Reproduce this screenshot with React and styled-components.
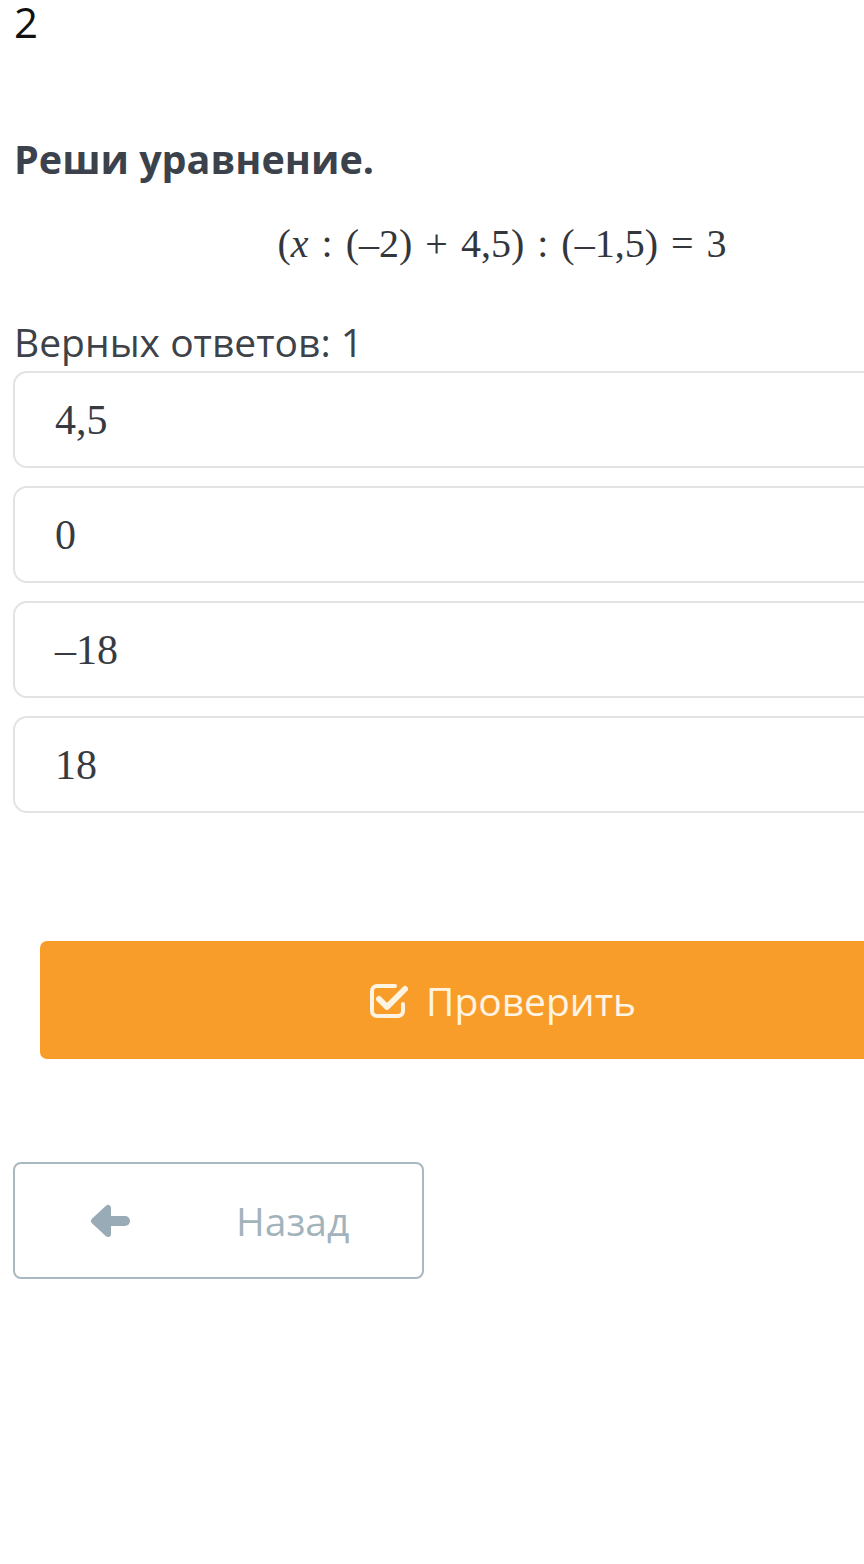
import React from 'react';
import styled, { createGlobalStyle } from 'styled-components';

const Global = createGlobalStyle`
  html, body {
    margin: 0;
    padding: 0;
    background: #fff;
    overflow: hidden;
  }
  body {
    font-family: "Open Sans", "Noto Sans", sans-serif;
  }
`;

const Page = styled.div`
  width: 864px;
  height: 1564px;
  overflow: hidden;
  background: #fff;
`;

const Content = styled.div`
  width: 978px;
  padding-left: 13px;
  display: flex;
  flex-direction: column;
`;

const Number = styled.div`
  font-size: 42px;
  line-height: 44px;
  color: #111;
  padding-left: 1px;
`;

const Title = styled.h2`
  margin: 93px 0 0;
  font-size: 39.5px;
  line-height: 44px;
  font-weight: 700;
  color: #3b424c;
  padding-left: 1px;
`;

const Equation = styled.div`
  margin-top: 41px;
  text-align: center;
  font-family: "Liberation Serif", "Times New Roman", serif;
  font-size: 40px;
  line-height: 44px;
  color: #33373d;
  word-spacing: 3px;
  i {
    font-style: italic;
  }
`;

const Hint = styled.div`
  margin-top: 54px;
  font-size: 39px;
  line-height: 44px;
  color: #3d4249;
  padding-left: 1px;
`;

const Options = styled.div`
  margin-top: 7px;
  display: flex;
  flex-direction: column;
  gap: 18px;
`;

const Option = styled.div`
  height: 97px;
  box-sizing: border-box;
  border: 2px solid #e3e3e3;
  border-radius: 14px;
  display: flex;
  align-items: center;
  padding-left: 40px;
  font-family: "Liberation Serif", "Times New Roman", serif;
  font-size: 42px;
  line-height: 44px;
  color: #373b41;
`;

const CheckButton = styled.button`
  margin: 128px 27px 0;
  height: 118px;
  border: none;
  border-radius: 7px;
  background: #f99d2a;
  color: #fff4e2;
  font-family: "Open Sans", "Noto Sans", sans-serif;
  font-size: 39px;
  display: flex;
  align-items: center;
  justify-content: center;
  gap: 16px;
  padding: 0;
`;

const BackButton = styled.button`
  margin-top: 103px;
  width: 411px;
  height: 117px;
  box-sizing: border-box;
  border: 2px solid #a9b9c2;
  border-radius: 8px;
  background: #fff;
  display: flex;
  align-items: center;
  padding: 0 0 0 75px;
  gap: 106px;
  color: #a3b3bc;
  font-family: "Open Sans", "Noto Sans", sans-serif;
  font-size: 39px;
`;

const CheckIcon = () => (
  <svg width="42" height="40" viewBox="0 0 42 40" fill="none">
    <path
      d="M27 6 H9 a5 5 0 0 0 -5 5 V31 a5 5 0 0 0 5 5 H30 a5 5 0 0 0 5 -5 V24"
      stroke="#fff4e2"
      strokeWidth="4"
      strokeLinecap="round"
    />
    <path
      d="M11 19 L19 27 L37 9"
      stroke="#fff4e2"
      strokeWidth="6"
      strokeLinecap="round"
      strokeLinejoin="round"
    />
  </svg>
);

const BackArrow = () => (
  <svg width="40" height="34" viewBox="0 0 40 34" fill="#98abb6">
    <line x1="17" y1="17" x2="35" y2="17" stroke="#98abb6" strokeWidth="10" strokeLinecap="round" />
    <polygon
      points="4,17 18,4 18,30"
      stroke="#98abb6"
      strokeWidth="6"
      strokeLinejoin="round"
    />
  </svg>
);

const answers = ['4,5', '0', '–18', '18'];

export default function App() {
  return (
    <Page>
      <Global />
      <Content>
        <Number>2</Number>
        <Title>Реши уравнение.</Title>
        <Equation>
          (<i>x</i> : (–2) + 4,5) : (–1,5) = 3
        </Equation>
        <Hint>Верных ответов: 1</Hint>
        <Options>
          {answers.map((a) => (
            <Option key={a}>{a}</Option>
          ))}
        </Options>
        <CheckButton>
          <CheckIcon />
          Проверить
        </CheckButton>
        <BackButton>
          <BackArrow />
          Назад
        </BackButton>
      </Content>
    </Page>
  );
}
